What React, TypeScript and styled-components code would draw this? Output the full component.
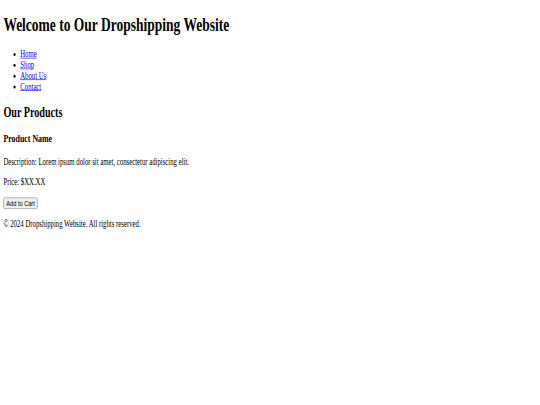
import styled, { createGlobalStyle } from "styled-components";

const GlobalStyle = createGlobalStyle`
  html, body {
    margin: 0;
    padding: 0;
    background: #ffffff;
    overflow: hidden;
  }
  body {
    width: 540px;
    height: 405px;
  }
`;

// the reference is a 1280px wide page squeezed into 540x405
const Page = styled.div`
  display: flow-root;
  width: 1280px;
  padding: 0.8px 8px 0;
  box-sizing: border-box;
  transform: scale(0.421875, 0.602);
  transform-origin: 0 0;
  font-family: "Liberation Serif", "Times New Roman", serif;
  font-size: 16px;
  color: #000000;
`;

const Header = styled.header``;

const Title = styled.h1`
  font-size: 32px;
  font-weight: bold;
  margin: 21.44px 0;
`;

const NavList = styled.ul`
  list-style: disc;
  margin: 16px 0;
  padding-left: 40px;
`;

const NavItem = styled.li``;

const NavLink = styled.a`
  color: #0000ee;
  text-decoration: underline;
  cursor: pointer;
`;

const Section = styled.section``;

const SectionTitle = styled.h2`
  font-size: 24px;
  font-weight: bold;
  margin: 19.92px 0;
`;

const Product = styled.div``;

const ProductName = styled.h3`
  font-size: 18.72px;
  font-weight: bold;
  margin: 18.72px 0;
`;

const Text = styled.p`
  margin: 16px 0;
`;

const CartButton = styled.button`
  font-family: "Liberation Sans", Arial, sans-serif;
  font-size: 13.33px;
  color: #000000;
  background: #efefef;
  border: 1px solid #767676;
  border-radius: 3px;
  padding: 1px 6px;
`;

const Footer = styled.footer``;

const links = ["Home", "Shop", "About Us", "Contact"];

export default function App() {
  return (
    <>
      <GlobalStyle />
      <Page>
        <Header>
          <Title>Welcome to Our Dropshipping Website</Title>
          <nav>
            <NavList>
              {links.map((link) => (
                <NavItem key={link}>
                  <NavLink href="#">{link}</NavLink>
                </NavItem>
              ))}
            </NavList>
          </nav>
        </Header>
        <Section>
          <SectionTitle>Our Products</SectionTitle>
          <Product>
            <ProductName>Product Name</ProductName>
            <Text>Description: Lorem ipsum dolor sit amet, consectetur adipiscing elit.</Text>
            <Text>Price: $XX.XX</Text>
            <CartButton>Add to Cart</CartButton>
          </Product>
        </Section>
        <Footer>
          <Text>&copy; 2024 Dropshipping Website. All rights reserved.</Text>
        </Footer>
      </Page>
    </>
  );
}
